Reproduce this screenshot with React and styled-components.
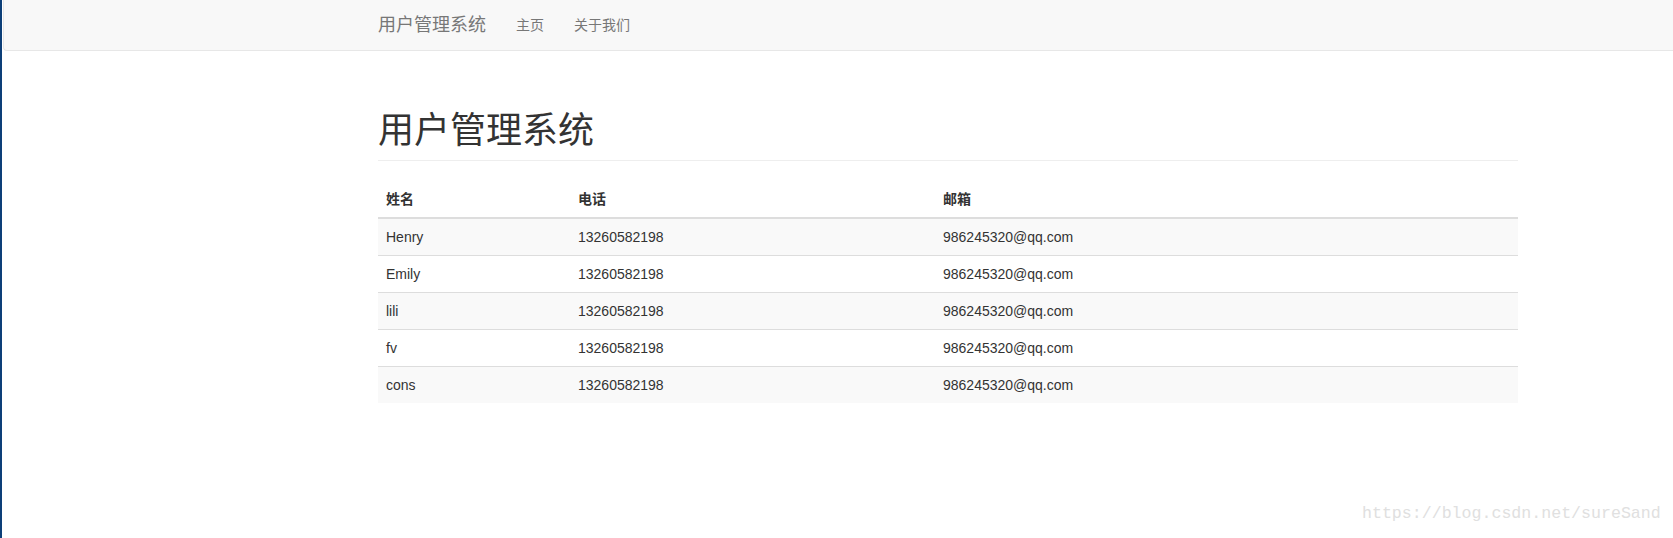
import React from "react";
import styled, { createGlobalStyle } from "styled-components";

const Global = createGlobalStyle`
  html, body { margin: 0; padding: 0; background: #fff; }
  body {
    font-family: "Liberation Sans", Arial, "Noto Sans CJK SC", sans-serif;
    font-size: 14px;
    line-height: 1.42857143;
    color: #333;
  }
  * { box-sizing: border-box; }
`;

const Frame = styled.div`
  position: relative;
  height: 538px;
  border-left: 2px solid #0d3f78;
  padding-left: 1px;
  overflow: hidden;
`;

const Navbar = styled.nav`
  height: 51px;
  background: #f8f8f8;
  border: 1px solid #e7e7e7;
  border-top: 0;
  border-right: 0;
  border-radius: 0 0 0 4px;
  margin-bottom: 20px;
`;

const Container = styled.div`
  display: flow-root;
  width: 1140px;
  margin-left: ${(p) => p.$inset}px;
`;

const NavInner = styled(Container)`
  display: flex;
  align-items: stretch;
  height: 50px;
`;

const Brand = styled.a`
  display: block;
  height: 50px;
  padding: 15px 15px 15px 0;
  font-size: 18px;
  line-height: 20px;
  color: #777;
  text-decoration: none;
`;

const NavList = styled.ul`
  display: flex;
  list-style: none;
  margin: 0;
  padding: 0;
`;

const NavLink = styled.a`
  display: block;
  padding: 15px;
  line-height: 20px;
  font-size: 14px;
  color: #777;
  text-decoration: none;
`;

const PageHeader = styled.div`
  margin: 40px 0 20px;
  padding-bottom: 9px;
  border-bottom: 1px solid #eee;
`;

const Title = styled.h1`
  margin: 0;
  font-size: 36px;
  font-weight: 400;
  line-height: 1.1;
  color: #333;
`;

const Table = styled.table`
  width: 100%;
  border-collapse: collapse;
  border-spacing: 0;
  table-layout: fixed;
`;

const Th = styled.th`
  width: ${(p) => (p.$w ? `${p.$w}px` : "auto")};
  text-align: left;
  padding: 8px;
  line-height: 20px;
  font-weight: bold;
  vertical-align: bottom;
  border-bottom: 2px solid #ddd;
`;

const Tr = styled.tr`
  background: ${(p) => (p.$striped ? "#f9f9f9" : "#fff")};
`;

const Td = styled.td`
  padding: 8px;
  line-height: 20px;
  vertical-align: top;
  border-top: ${(p) => (p.$first ? "0" : "1px solid #ddd")};
`;

const Watermark = styled.div`
  position: absolute;
  left: 1360px;
  top: 502px;
  font-family: "Liberation Mono", "DejaVu Sans Mono", monospace;
  font-size: 16.6px;
  line-height: 24px;
  color: #e0e0e0;
  white-space: nowrap;
`;

const users = [
  { name: "Henry", phone: "13260582198", email: "986245320@qq.com" },
  { name: "Emily", phone: "13260582198", email: "986245320@qq.com" },
  { name: "lili", phone: "13260582198", email: "986245320@qq.com" },
  { name: "fv", phone: "13260582198", email: "986245320@qq.com" },
  { name: "cons", phone: "13260582198", email: "986245320@qq.com" },
];

export default function App() {
  return (
    <Frame>
      <Global />
      <Navbar>
        <NavInner $inset={374}>
          <Brand href="#">用户管理系统</Brand>
          <NavList>
            <li><NavLink href="#">主页</NavLink></li>
            <li><NavLink href="#">关于我们</NavLink></li>
          </NavList>
        </NavInner>
      </Navbar>
      <Container $inset={375}>
        <PageHeader>
          <Title>用户管理系统</Title>
        </PageHeader>
        <Table>
          <thead>
            <tr>
              <Th $w={192}>姓名</Th>
              <Th $w={365}>电话</Th>
              <Th>邮箱</Th>
            </tr>
          </thead>
          <tbody>
            {users.map((u, i) => (
              <Tr key={u.name} $striped={i % 2 === 0}>
                <Td $first={i === 0}>{u.name}</Td>
                <Td $first={i === 0}>{u.phone}</Td>
                <Td $first={i === 0}>{u.email}</Td>
              </Tr>
            ))}
          </tbody>
        </Table>
      </Container>
      <Watermark>https://blog.csdn.net/sureSand</Watermark>
    </Frame>
  );
}
